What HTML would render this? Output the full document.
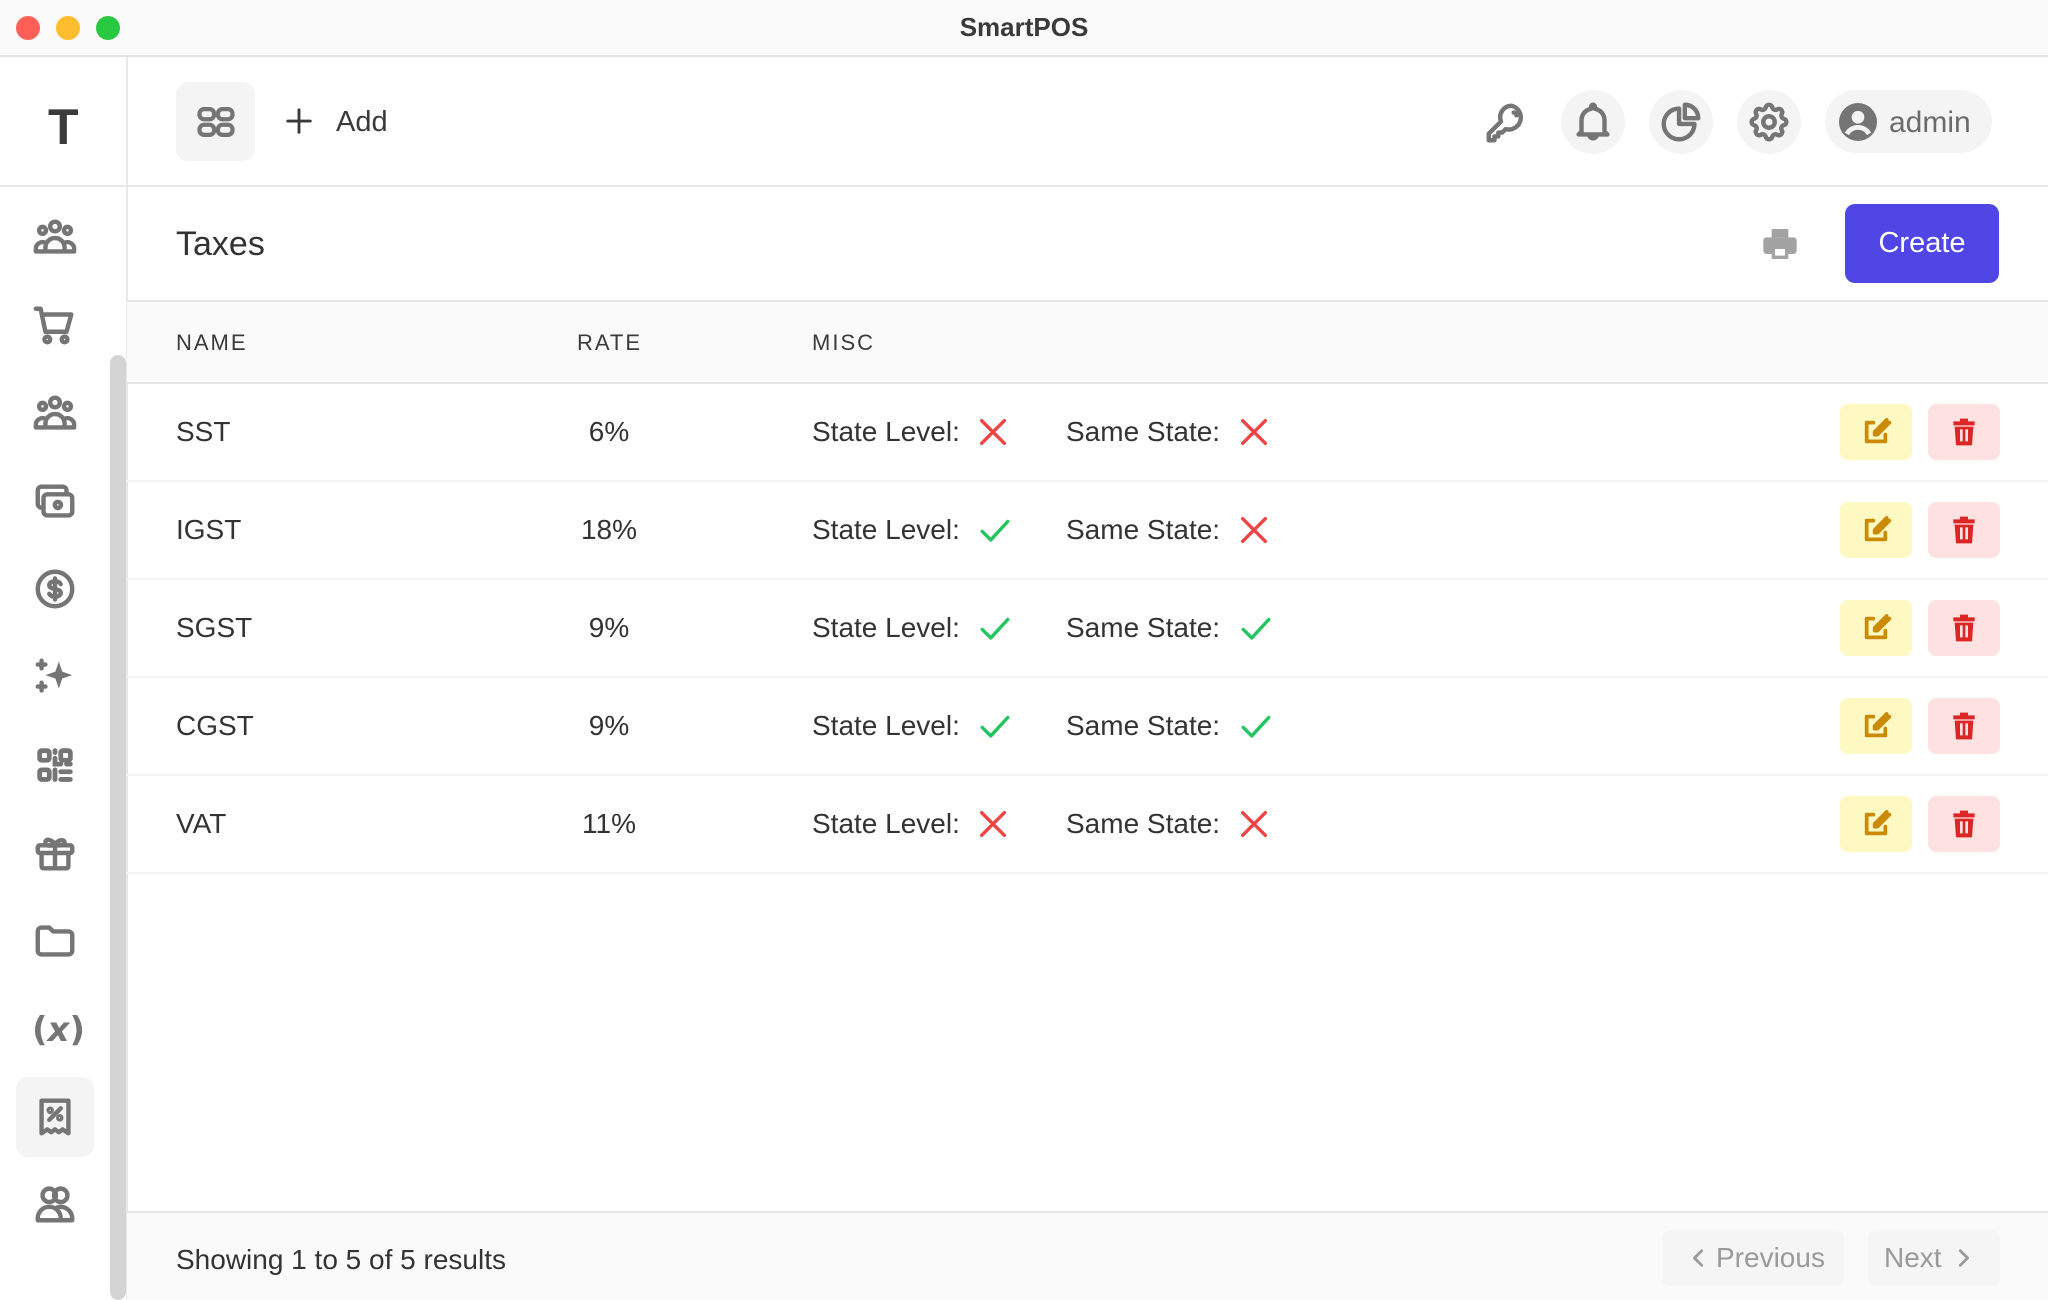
<!DOCTYPE html>
<html><head><meta charset="utf-8"><style>
*{box-sizing:border-box;margin:0;padding:0}
body{width:2048px;height:1300px;overflow:hidden;background:#fff;font-family:"Liberation Sans",sans-serif;color:#333;position:relative}
.a{position:absolute}
.ic{position:absolute;fill:none;stroke:#757575;stroke-width:2.3;stroke-linecap:round;stroke-linejoin:round}
.row{position:absolute;left:127px;right:0;height:98px;border-bottom:2px solid #f3f3f3}
.t{position:absolute;font-size:28px;color:#333;line-height:1}
.circ{position:absolute;width:64px;height:64px;border-radius:50%;background:#f4f4f4}
</style></head><body>
<div class="a" style="left:0;top:0;width:2048px;height:57px;background:#fbfbfb;border-bottom:2px solid #e4e4e4"></div>
<div class="a" style="left:16px;top:16px;width:24px;height:24px;border-radius:50%;background:#fe5f57"></div>
<div class="a" style="left:56px;top:16px;width:24px;height:24px;border-radius:50%;background:#febc2e"></div>
<div class="a" style="left:96px;top:16px;width:24px;height:24px;border-radius:50%;background:#28c840"></div>
<div class="a" style="left:0;width:2048px;top:12px;text-align:center;font-size:26px;font-weight:bold;color:#3a3a3a">SmartPOS</div>

<div class="a" style="left:126px;top:57px;width:2px;height:1243px;background:#e8e8e8"></div>
<div class="a" style="left:0;top:185px;width:2048px;height:2px;background:#e8e8e8"></div>
<div class="a" style="left:48px;top:98px;font-size:50px;font-weight:bold;color:#3a3a3a">T</div>
<div class="a" style="left:110px;top:355px;width:16px;height:945px;border-radius:8px;background:#d4d4d4"></div>
<div class="a" style="left:16px;top:1077px;width:78px;height:80px;border-radius:12px;background:#f4f4f4"></div>

<svg class="ic" style="left:32px;top:215px" width="46" height="46" viewBox="0 0 24 24"><circle cx="12" cy="6" r="2.5"/><circle cx="5.5" cy="8" r="1.8"/><circle cx="18.5" cy="8" r="1.8"/><path d="M7 19v-2a5 5 0 0 1 10 0v2zM2 19v-1.5a3.5 3.5 0 0 1 5-3M22 19v-1.5a3.5 3.5 0 0 0-5-3M2 19h20"/></svg>
<svg class="ic" style="left:32px;top:303px" width="46" height="46" viewBox="0 0 24 24"><path d="M2 3h2.5l2.5 12h11l2.5-9H5.5"/><circle cx="8" cy="19" r="1.5"/><circle cx="17" cy="19" r="1.5"/></svg>
<svg class="ic" style="left:32px;top:391px" width="46" height="46" viewBox="0 0 24 24"><circle cx="12" cy="6" r="2.5"/><circle cx="5.5" cy="8" r="1.8"/><circle cx="18.5" cy="8" r="1.8"/><path d="M7 19v-2a5 5 0 0 1 10 0v2zM2 19v-1.5a3.5 3.5 0 0 1 5-3M22 19v-1.5a3.5 3.5 0 0 0-5-3M2 19h20"/></svg>
<svg class="ic" style="left:32px;top:479px" width="46" height="46" viewBox="0 0 24 24"><rect x="6" y="8" width="15" height="11" rx="2"/><path d="M18 8V6a2 2 0 0 0-2-2H5a2 2 0 0 0-2 2v7a2 2 0 0 0 2 2h1"/><circle cx="13.5" cy="13.5" r="1.6"/></svg>
<svg class="ic" style="left:32px;top:566px" width="46" height="46" viewBox="0 0 24 24"><circle cx="12" cy="12" r="9"/><path d="M15 9.5c-.5-1-1.6-1.5-3-1.5-1.7 0-3 .8-3 2s1.3 1.7 3 2 3 .8 3 2-1.3 2-3 2c-1.4 0-2.5-.5-3-1.5M12 6.5v11"/></svg>
<svg style="position:absolute;left:32px;top:654px" width="46" height="46" viewBox="0 0 24 24" fill="#757575"><path d="M14 4l1.8 5.2L21 11l-5.2 1.8L14 18l-1.8-5.2L7 11l5.2-1.8z"/><path d="M5 3.5v4M3 5.5h4M5 15v4M3 17h4" stroke="#757575" stroke-width="2.3" stroke-linecap="round"/></svg>
<svg style="position:absolute;left:32px;top:743px" width="46" height="46" viewBox="0 0 24 24" fill="none" stroke="#757575" stroke-width="2.5" stroke-linecap="round"><rect x="4" y="4" width="5" height="5" rx="1"/><rect x="4" y="14" width="5" height="5" rx="1"/><rect x="15" y="4" width="5" height="5" rx="1"/><path d="M12 4v1M12 8v3h3M18 11h2M12 14v5M15 15h5M15 19h5"/></svg>
<svg class="ic" style="left:32px;top:830px" width="46" height="46" viewBox="0 0 24 24"><rect x="3" y="8" width="18" height="4" rx="1"/><path d="M5 12v7a1 1 0 0 0 1 1h12a1 1 0 0 0 1-1v-7M12 8v12M12 8c-1-3-5-4-5-1.5S10 8 12 8c2 0 5 .5 5-1.5S13 5 12 8"/></svg>
<svg class="ic" style="left:32px;top:918px" width="46" height="46" viewBox="0 0 24 24"><path d="M3 7a2 2 0 0 1 2-2h4l2 2h8a2 2 0 0 1 2 2v8a2 2 0 0 1-2 2H5a2 2 0 0 1-2-2z"/></svg>
<div class="a" style="left:32px;top:1010px;font-size:34px;font-weight:bold;color:#757575;font-family:'DejaVu Sans',sans-serif">(<i>x</i>)</div>
<svg class="ic" style="left:32px;top:1093px" width="46" height="46" viewBox="0 0 24 24"><path d="M5 21V4h14v17l-3-2-2 1.5-2-1.5-2 1.5-2-1.5zM9 14l6-6"/><circle cx="9.5" cy="9" r=".8"/><circle cx="14.5" cy="13" r=".8"/></svg>
<svg class="ic" style="left:32px;top:1180px" width="46" height="46" viewBox="0 0 24 24"><circle cx="9" cy="8" r="3.5"/><circle cx="15" cy="8" r="3.5"/><path d="M3 21v-1a6 6 0 0 1 12 0v1zM15 21h6v-1a6 6 0 0 0-8-5.6"/></svg>

<div class="a" style="left:176px;top:82px;width:79px;height:79px;border-radius:12px;background:#f4f4f4"></div>
<svg class="ic" style="left:194px;top:100px" width="44" height="44" viewBox="0 0 24 24"><rect x="3" y="5" width="8" height="5.5" rx="2.5"/><rect x="13" y="5" width="8" height="5.5" rx="2.5"/><rect x="3" y="13.5" width="8" height="5.5" rx="2.5"/><rect x="13" y="13.5" width="8" height="5.5" rx="2.5"/></svg>
<svg class="ic" style="left:284px;top:106px;stroke:#3a3a3a" width="30" height="30" viewBox="0 0 24 24"><path d="M12 3v18M3 12h18"/></svg>
<div class="a" style="left:336px;top:106px;font-size:29px;color:#3a3a3a">Add</div>

<svg class="ic" style="left:1483px;top:100px" width="46" height="46" viewBox="0 0 24 24"><path d="M15 3a6 6 0 0 0-5.6 8.2L3 17.6V21h3v-2h2v-2h2l1.8-1.8A6 6 0 1 0 15 3z"/><path d="M16 6.5a2 2 0 0 1 1.5 1.5"/></svg>
<div class="circ" style="left:1561px;top:90px"></div>
<svg class="ic" style="left:1570px;top:99px" width="46" height="46" viewBox="0 0 24 24"><path d="M6 17V11a6 6 0 0 1 5-5.9V4a1 1 0 0 1 2 0v1.1A6 6 0 0 1 18 11v6l1.5 1.5h-15zM10 18.5a2 2 0 0 0 4 0"/></svg>
<div class="circ" style="left:1649px;top:90px"></div>
<svg class="ic" style="left:1658px;top:99px" width="46" height="46" viewBox="0 0 24 24"><path d="M11 5a8 8 0 1 0 8 8h-8z"/><path d="M14 3v7h7a7 7 0 0 0-7-7z"/></svg>
<div class="circ" style="left:1737px;top:90px"></div>
<svg class="ic" style="left:1746px;top:99px" width="46" height="46" viewBox="0 0 24 24"><path d="M10.3 4.3c.4-1.7 3-1.7 3.4 0a1.7 1.7 0 0 0 2.6 1.1c1.5-.9 3.3.8 2.4 2.4a1.7 1.7 0 0 0 1 2.5c1.8.4 1.8 3 0 3.4a1.7 1.7 0 0 0-1 2.6c.9 1.5-.9 3.3-2.4 2.4a1.7 1.7 0 0 0-2.6 1c-.4 1.8-3 1.8-3.4 0a1.7 1.7 0 0 0-2.6-1c-1.5.9-3.3-.9-2.4-2.4a1.7 1.7 0 0 0-1-2.6c-1.8-.4-1.8-3 0-3.4a1.7 1.7 0 0 0 1-2.5c-.9-1.6.9-3.3 2.4-2.4a1.7 1.7 0 0 0 2.6-1.1z"/><circle cx="12" cy="12" r="3"/></svg>
<div class="a" style="left:1825px;top:90px;width:167px;height:63px;border-radius:32px;background:#f4f4f4"></div>
<svg style="position:absolute;left:1839px;top:103px" width="38" height="38" viewBox="0 0 24 24"><circle cx="12" cy="12" r="12" fill="#757575"/><circle cx="12" cy="9" r="4" fill="#f4f4f4"/><path d="M5 19.5a8 8 0 0 1 14 0" stroke="#f4f4f4" stroke-width="3" fill="none"/></svg>
<div class="a" style="left:1889px;top:106px;font-size:30px;color:#6b6b6b">admin</div>

<div class="a" style="left:176px;top:225px;font-size:34px;color:#333">Taxes</div>
<svg style="position:absolute;left:1760px;top:224px" width="40" height="40" viewBox="0 0 24 24" fill="#a3a3a3"><path d="M7 3h10v5H7z"/><path d="M4 8h16a2 2 0 0 1 2 2v6a2 2 0 0 1-2 2h-3v3H7v-3H4a2 2 0 0 1-2-2v-6a2 2 0 0 1 2-2zM9 15v4h6v-4z"/></svg>
<div class="a" style="left:1845px;top:204px;width:154px;height:79px;border-radius:10px;background:#4f46e5;color:#fff;font-size:29px;text-align:center;line-height:79px">Create</div>

<div class="a" style="left:127px;top:300px;right:0;height:84px;background:#fafafa;border-top:2px solid #e6e6e6;border-bottom:2px solid #e6e6e6"></div>
<div class="a" style="left:176px;top:330px;font-size:22px;letter-spacing:2px;color:#3a3a3a">NAME</div>
<div class="a" style="left:577px;top:330px;font-size:22px;letter-spacing:2px;color:#3a3a3a">RATE</div>
<div class="a" style="left:812px;top:330px;font-size:22px;letter-spacing:2px;color:#3a3a3a">MISC</div>

<div id="rows"></div>
<script>
var data=[["SST","6%",0,0],["IGST","18%",1,0],["SGST","9%",1,1],["CGST","9%",1,1],["VAT","11%",0,0]];
var X='<svg width="34" height="34" viewBox="0 0 24 24" fill="none" stroke="#ef4444" stroke-width="2.4" stroke-linecap="round"><path d="M4 4l16 16M20 4L4 20"/></svg>';
var C='<svg width="38" height="34" viewBox="0 0 24 24" fill="none" stroke="#22c55e" stroke-width="2.4" stroke-linecap="round" stroke-linejoin="round"><path d="M3 13l6 6L21 6"/></svg>';
var h='';
data.forEach(function(d,i){
 var top=384+i*98;
 h+='<div class="row" style="top:'+top+'px"></div>';
 var ty=top+34;
 h+='<div class="t" style="left:176px;top:'+ty+'px">'+d[0]+'</div>';
 h+='<div class="t" style="left:540px;width:138px;text-align:center;top:'+ty+'px">'+d[1]+'</div>';
 h+='<div class="t" style="left:812px;top:'+ty+'px">State Level:</div>';
 h+='<div class="a" style="left:976px;top:'+(top+31)+'px">'+(d[2]?C:X)+'</div>';
 h+='<div class="t" style="left:1066px;top:'+ty+'px">Same State:</div>';
 h+='<div class="a" style="left:1237px;top:'+(top+31)+'px">'+(d[3]?C:X)+'</div>';
 h+='<div class="a" style="left:1840px;top:'+(top+20)+'px;width:72px;height:56px;border-radius:8px;background:#fef9c3"><svg style="position:absolute;left:20px;top:12px" width="32" height="32" viewBox="0 0 24 24" fill="none" stroke="#ca8a04" stroke-width="2.8" stroke-linecap="round" stroke-linejoin="round"><path d="M10 5H5v14h14v-5"/><path d="M20 3l-9 9v2h2l9-9"/></svg></div>';
 h+='<div class="a" style="left:1928px;top:'+(top+20)+'px;width:72px;height:56px;border-radius:8px;background:#fee2e2"><svg style="position:absolute;left:20px;top:12px" width="32" height="32" viewBox="0 0 24 24" fill="#dc2626"><path d="M9 2h6v2h5v3H4V4h5z"/><path d="M5 8h14l-1 14H6zM9 10v9h2v-9zM13 10v9h2v-9z" fill-rule="evenodd"/></svg></div>';
});
document.getElementById('rows').innerHTML=h;
</script>

<div class="a" style="left:127px;top:1211px;right:0;height:89px;background:#fafafa;border-top:2px solid #e6e6e6"></div>
<div class="a" style="left:176px;top:1244px;font-size:28px;color:#333">Showing 1 to 5 of 5 results</div>
<div class="a" style="left:1662px;top:1230px;width:182px;height:56px;border-radius:8px;background:#f5f5f5;color:#9a9a9a;font-size:28px;line-height:56px;padding-left:54px">Previous</div>
<svg class="ic" style="left:1688px;top:1246px;stroke:#9a9a9a;stroke-width:3" width="22" height="24" viewBox="0 0 24 24"><path d="M15 4l-8 8 8 8"/></svg>
<div class="a" style="left:1868px;top:1230px;width:132px;height:56px;border-radius:8px;background:#f5f5f5;color:#9a9a9a;font-size:28px;line-height:56px;padding-left:16px">Next</div>
<svg class="ic" style="left:1952px;top:1246px;stroke:#9a9a9a;stroke-width:3" width="22" height="24" viewBox="0 0 24 24"><path d="M9 4l8 8-8 8"/></svg>
</body></html>
